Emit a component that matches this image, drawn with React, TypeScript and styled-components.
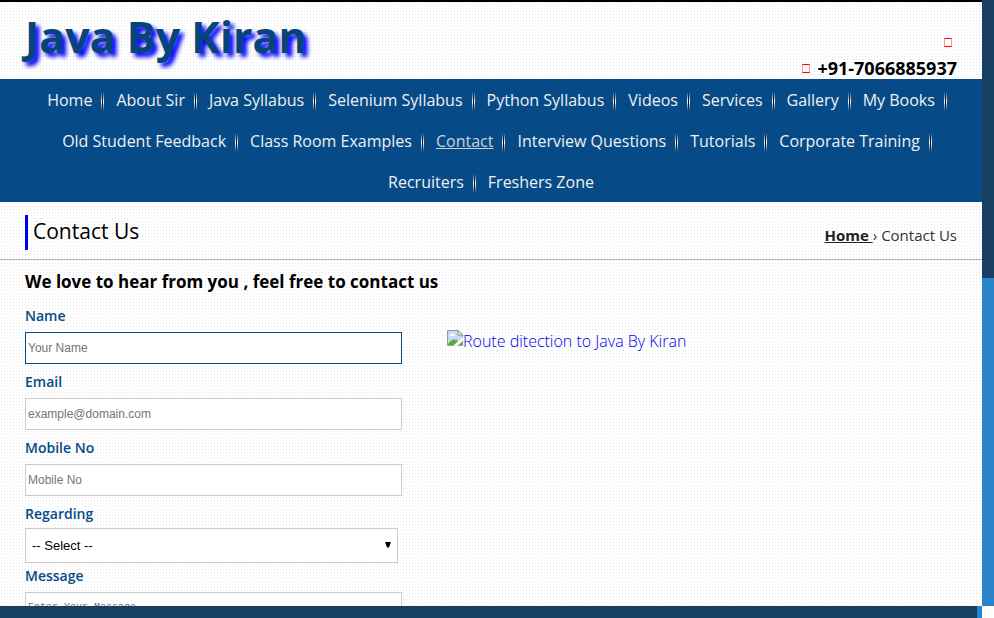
import React from "react";
import styled, { createGlobalStyle, css } from "styled-components";

const dots =
  "url(\"data:image/svg+xml,%3Csvg xmlns='http://www.w3.org/2000/svg' width='3' height='3' shape-rendering='crispEdges'%3E%3Crect width='1' height='1' x='1' y='0' fill='%23e9e9e9'/%3E%3C/svg%3E\")";

const GlobalStyle = createGlobalStyle`
  *, *::before, *::after { box-sizing: border-box; }
  body {
    margin: 0;
    font-family: "Open Sans", "Noto Sans", sans-serif;
    font-size: 15px;
    color: #000;
    background: #fff;
  }
  h1, h2, h3, p, ul { margin: 0; padding: 0; }
`;

const Frame = styled.div`
  display: grid;
  grid-template: minmax(0, 1fr) 12px / minmax(0, 1fr) 12px;
  height: 100vh;
`;

const Page = styled.div`
  overflow: hidden;
  border-top: 2px solid #000;
  background: #fff ${dots};
`;

const ScrollTrack = styled.div<{ $vertical?: boolean }>`
  display: flex;
  flex-direction: ${(p) => (p.$vertical ? "column" : "row")};
  background: #2a84c9;
`;

const ScrollThumb = styled.div<{ $share: string }>`
  flex: 0 0 ${(p) => p.$share};
  background: #163f61;
`;

const Header = styled.header`
  display: flex;
  justify-content: space-between;
  height: 77px;
  padding: 0 25px;
`;

const Logo = styled.h1`
  font-size: 43px;
  font-weight: 700;
  line-height: 70px;
  color: #064479;
  text-shadow: 4px 4px 4px #00f;
`;

const ContactLines = styled.div`
  display: flex;
  flex-direction: column;
  align-items: flex-end;
  justify-content: flex-end;
  gap: 4px;
  font-size: 18px;
  font-weight: 700;
  line-height: 22px;
`;

const ContactLine = styled.p<{ $inset?: boolean }>`
  display: flex;
  align-items: center;
  gap: 7px;
  min-height: 22px;
  padding-right: ${(p) => (p.$inset ? "5px" : "0")};
`;

const EmptyGlyph = styled.span`
  width: 8px;
  height: 9px;
  border: 1px solid #f99;
  border-top-color: #f00;
  border-bottom-color: #f00;
`;

const Nav = styled.nav`
  background: #064b88;
`;

const NavList = styled.ul`
  display: flex;
  flex-wrap: wrap;
  justify-content: center;
  padding: 0 25px;
  list-style: none;
`;

const NavItem = styled.li`
  padding: 2px 12px 0;
  line-height: 39px;
  background:
    linear-gradient(transparent, #fff 50%, transparent) right 0 top 13px / 1px 19px no-repeat,
    linear-gradient(transparent, #000 50%, transparent) right 1px top 13px / 1px 19px no-repeat,
    linear-gradient(transparent, #fff 50%, transparent) right 2px top 13px / 1px 19px no-repeat;
  &:last-child { background: none; }
`;

const NavLink = styled.a<{ $current?: boolean }>`
  font-size: 16px;
  color: #f0f0f0;
  text-decoration: none;
  ${(p) => p.$current && css`color: #d0d0d0; text-decoration: underline;`}
`;

const TitleBar = styled.div`
  display: flex;
  justify-content: space-between;
  align-items: center;
  padding: 13px 25px 9px;
  border-bottom: 1px solid #b4b4b4;
`;

const Title = styled.h2`
  padding: 0 0 2px 5px;
  border-left: 3px solid #00f;
  font-size: 21px;
  font-weight: 400;
  line-height: 33px;
`;

const Crumbs = styled.nav`
  padding-top: 4px;
  font-size: 15px;
  line-height: 20px;
  color: #333;
`;

const CrumbLink = styled.a`
  font-weight: 700;
  color: #222;
`;

const Main = styled.main`
  padding: 10px 25px 0;
`;

const Lead = styled.h3`
  font-size: 17px;
  font-weight: 700;
  line-height: 24px;
`;

const Columns = styled.div`
  display: grid;
  grid-template-columns: minmax(0, 377fr) minmax(0, 510fr);
  column-gap: 45px;
`;

const Form = styled.form`
  display: flex;
  flex-direction: column;
  padding-top: 12px;
`;

const Field = styled.div<{ $tight?: boolean }>`
  display: flex;
  flex-direction: column;
  margin-bottom: ${(p) => (p.$tight ? "3px" : "8px")};
`;

const Label = styled.label<{ $tight?: boolean }>`
  margin-bottom: ${(p) => (p.$tight ? "4px" : "6px")};
  font-size: 14px;
  font-weight: 600;
  line-height: 20px;
  color: #064b88;
`;

const control = css`
  width: 100%;
  border: 1px solid #ccc;
  border-radius: 0;
  background: #fff;
  outline: 0;
  font-family: "Liberation Sans", Arial, sans-serif;
`;

const TextInput = styled.input<{ $active?: boolean }>`
  ${control}
  height: 32px;
  padding: 1px 2px;
  font-size: 12px;
  ${(p) => p.$active && css`border-color: #064b88;`}
  &::placeholder { color: #757575; }
`;

const SelectWrap = styled.div`
  position: relative;
  margin-right: 4px;
`;

const Select = styled.select`
  ${control}
  display: block;
  appearance: none;
  height: 35px;
  padding: 0 6px;
  font-size: 13px;
  color: #000;
`;

const Arrow = styled.svg`
  position: absolute;
  right: 7px;
  top: 14px;
  pointer-events: none;
`;

const TextArea = styled.textarea`
  ${control}
  height: 90px;
  padding: 9px 2px;
  resize: none;
  font-family: "Liberation Mono", monospace;
  font-size: 10px;
  &::placeholder { color: #757575; }
`;

const RouteLink = styled.a`
  display: flex;
  padding-top: 36px;
  font-size: 16px;
  font-weight: 300;
  line-height: 22px;
  color: #00e;
  text-decoration: none;
`;

const menu = [
  "Home", "About Sir", "Java Syllabus", "Selenium Syllabus", "Python Syllabus",
  "Videos", "Services", "Gallery", "My Books", "Old Student Feedback",
  "Class Room Examples", "Contact", "Interview Questions", "Tutorials",
  "Corporate Training", "Recruiters", "Freshers Zone",
];

const fields = [
  { id: "name", label: "Name", hint: "Your Name", type: "text", active: true },
  { id: "email", label: "Email", hint: "example@domain.com", type: "email" },
  { id: "mobile", label: "Mobile No", hint: "Mobile No", type: "tel" },
];

function BrokenImage() {
  return (
    <svg width="16" height="16" viewBox="0 0 16 16" aria-hidden="true">
      <path d="M.5.5H11L15.5 5V15.5H.5Z" fill="#c6d8f6" stroke="#999" />
      <path d="M2.500 6Q2.500 4.500 4 4.500 5 2.500 6.500 4 8 4 8 6Z" fill="#fff" />
      <path d="M1 15v-1Q4 9.500 7.500 9.500 10 9.500 11 11L7 15Z" fill="#5aab3a" />
      <path d="M11 .5V5h4.500Z" fill="#fff" stroke="#8c8c8c" />
      <path d="M16 7 6.500 16H10L16 10.500Z" fill="#fff" />
      <path d="M11.500 15 15 12v3Z" fill="#5aab3a" />
    </svg>
  );
}

export default function App() {
  return (
    <>
      <GlobalStyle />
      <Frame>
        <Page>
          <Header>
            <Logo>Java By Kiran</Logo>
            <ContactLines>
              <ContactLine $inset><EmptyGlyph /></ContactLine>
              <ContactLine><EmptyGlyph />+91-7066885937</ContactLine>
            </ContactLines>
          </Header>
          <Nav>
            <NavList>
              {menu.map((name) => (
                <NavItem key={name}>
                  <NavLink href="#" $current={name === "Contact"}>{name}</NavLink>
                </NavItem>
              ))}
            </NavList>
          </Nav>
          <TitleBar>
            <Title>Contact Us</Title>
            <Crumbs><CrumbLink href="#">Home </CrumbLink>› Contact Us</Crumbs>
          </TitleBar>
          <Main>
            <Lead>We love to hear from you , feel free to contact us</Lead>
            <Columns>
              <Form>
                {fields.map((f) => (
                  <Field key={f.id}>
                    <Label htmlFor={f.id}>{f.label}</Label>
                    <TextInput id={f.id} type={f.type} placeholder={f.hint} $active={f.active} />
                  </Field>
                ))}
                <Field $tight>
                  <Label htmlFor="regarding" $tight>Regarding</Label>
                  <SelectWrap>
                    <Select id="regarding"><option>-- Select --</option></Select>
                    <Arrow width="6" height="6" viewBox="0 0 6 6" aria-hidden="true"><path d="M0 0h6L4 5.500H2Z" /></Arrow>
                  </SelectWrap>
                </Field>
                <Field>
                  <Label htmlFor="message">Message</Label>
                  <TextArea id="message" placeholder="Enter Your Message" />
                </Field>
              </Form>
              <RouteLink href="#"><BrokenImage />Route ditection to Java By Kiran</RouteLink>
            </Columns>
          </Main>
        </Page>
        <ScrollTrack $vertical><ScrollThumb $share="45.9%" /></ScrollTrack>
        <ScrollTrack><ScrollThumb $share="99.5%" /></ScrollTrack>
      </Frame>
    </>
  );
}
